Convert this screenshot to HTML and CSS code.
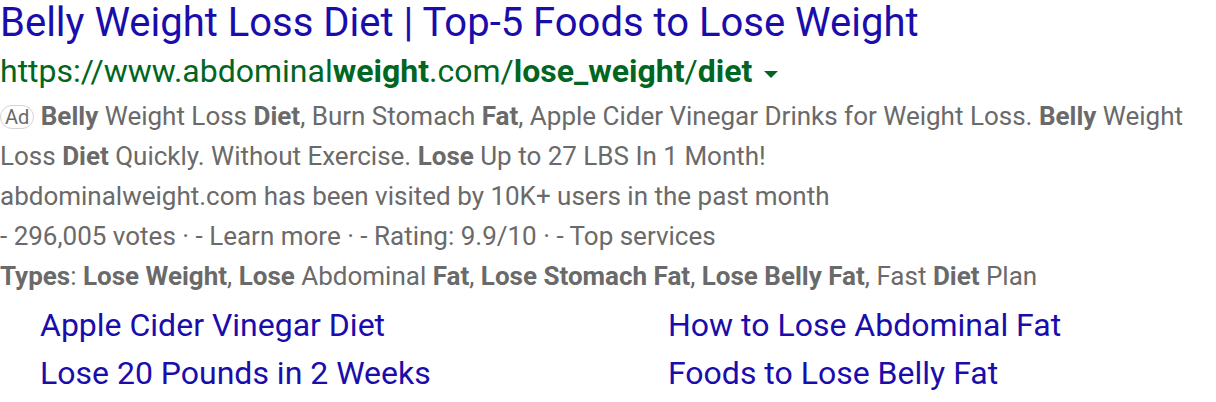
FILE: index.html
```html
<!DOCTYPE html>
<html>
<head>
<meta charset="utf-8">
<link rel="stylesheet" href="styles.css">
</head>
<body>
<div class="ad">
  <div class="title">Belly Weight Loss Diet | Top-5 Foods to Lose Weight</div>
  <div class="url">https://www.abdominal<b>weight</b>.com/<b>lose_weight</b>/<b>diet</b><span class="caret"></span></div>
  <div class="desc"><span class="badge">Ad</span> <b>Belly</b> Weight Loss <b>Diet</b>, Burn Stomach <b>Fat</b>, Apple Cider Vinegar Drinks for Weight Loss. <b>Belly</b> Weight Loss <b>Diet</b> Quickly. Without Exercise. <b>Lose</b> Up to 27 LBS In 1 Month!</div>
  <div class="line">abdominalweight.com has been visited by 10K+ users in the past month</div>
  <div class="line">- 296,005 votes · - Learn more · - Rating: 9.9/10 · - Top services</div>
  <div class="line"><b>Types</b>: <b>Lose Weight</b>, <b>Lose</b> Abdominal <b>Fat</b>, <b>Lose Stomach Fat</b>, <b>Lose Belly Fat</b>, Fast <b>Diet</b> Plan</div>
  <div class="sitelinks">
    <a class="sl">Apple Cider Vinegar Diet</a>
    <a class="sl">How to Lose Abdominal Fat</a>
    <a class="sl">Lose 20 Pounds in 2 Weeks</a>
    <a class="sl">Foods to Lose Belly Fat</a>
  </div>
</div>
</body>
</html>
```

FILE: styles.css
```css
html, body {
  margin: 0;
  padding: 0;
  background: #fff;
}
.ad {
  font-family: Roboto, "Noto Sans", sans-serif;
  width: 1210px;
}
.title {
  color: #1a0dab;
  font-size: 40px;
  line-height: 46px;
}
.url {
  color: #006621;
  font-size: 32px;
  line-height: 50px;
  display: flex;
  align-items: center;
  white-space: pre;
}
.url b { font-weight: 700; }
.caret {
  width: 0;
  height: 0;
  border-left: 7px solid transparent;
  border-right: 7px solid transparent;
  border-top: 7px solid #006621;
  margin-left: 12px;
  margin-top: 6px;
}
.desc, .line {
  color: #6a6a6a;
  font-size: 26px;
  line-height: 40px;
}
.desc { width: 1195px; }
.desc b, .line b { font-weight: 700; }
.badge {
  display: inline-block;
  border: 1px solid #d4d4d4;
  border-radius: 12px;
  font-size: 20px;
  line-height: 22px;
  padding: 0 4px 0 4px;
  margin-left: 0;
  color: #6a6a6a;
  vertical-align: 1px;
}
.sitelinks {
  display: grid;
  grid-template-columns: 628px 1fr;
  padding-left: 40px;
  margin-top: 5px;
}
.sl {
  color: #1a0dab;
  font-size: 32px;
  line-height: 48px;
}
```
